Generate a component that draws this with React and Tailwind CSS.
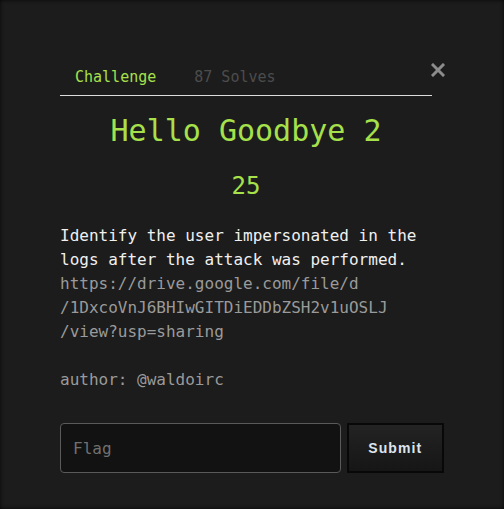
import React from "react";

const MONO = "font-['DejaVu_Sans_Mono','Liberation_Mono',monospace]";

export default function App() {
  return (
    <div className="w-[504px] h-[509px] bg-[#1c1c1c] shadow-[inset_0_0_4px_rgba(0,0,0,0.8)] overflow-hidden">
      <div className={`${MONO} pt-[64px] px-[60px] relative`}>
        {/* Close */}
        <button aria-label="Close" className="absolute right-[59px] top-[63px] w-[14px] h-[14px]">
          <svg viewBox="0 0 14 14" className="w-[14px] h-[14px]">
            <path d="M2 2 L12 12 M12 2 L2 12" stroke="#8c8c8c" strokeWidth="3" strokeLinecap="square" />
          </svg>
        </button>

        {/* Tabs */}
        <div className="w-[372px] border-b border-[#dcdcdc] flex items-end h-[32px]">
          <span className="ml-[15px] text-[15px] leading-[24px] pb-[6px] text-[#a6e14b]">Challenge</span>
          <span className="ml-[38px] text-[15px] leading-[24px] pb-[6px] text-[#4c4c4c]">87 Solves</span>
        </div>

        {/* Title */}
        <h1 className="mt-[15px] text-center w-[372px] text-[30px] leading-[40px] text-[#a6e14b]">Hello Goodbye 2</h1>
        <div className="mt-[19px] text-center w-[372px] text-[24px] leading-[32px] text-[#a6e14b]">25</div>

        {/* Description */}
        <div className="mt-[22px] text-[16px] leading-[24px]">
          <p className="text-[#f0f0f0]">
            Identify the user impersonated in the
            <br />
            logs after the attack was performed.
          </p>
          <p className="text-[#9a9a9a]">
            https://drive.google.com/file/d
            <br />
            /1DxcoVnJ6BHIwGITDiEDDbZSH2v1uOSLJ
            <br />
            /view?usp=sharing
          </p>
          <p className="mt-[24px] text-[#9a9a9a]">author: @waldoirc</p>
        </div>

        {/* Flag form */}
        <div className="mt-[31px] flex gap-[6px]">
          <input
            placeholder="Flag"
            className={`${MONO} w-[282px] h-[50px] rounded-[4px] border border-[#5a5a5a] bg-[#121212] px-[12px] text-[16px] text-[#ddd] placeholder:text-[#707070] outline-none`}
          />
          <button className="w-[98px] h-[50px] border-2 border-[#080808] bg-gradient-to-b from-[#232323] to-[#161616] text-[#dde4ee] text-[14px] font-bold tracking-[0.08em] font-['Liberation_Sans',Arial,sans-serif]">
            Submit
          </button>
        </div>
      </div>
    </div>
  );
}
